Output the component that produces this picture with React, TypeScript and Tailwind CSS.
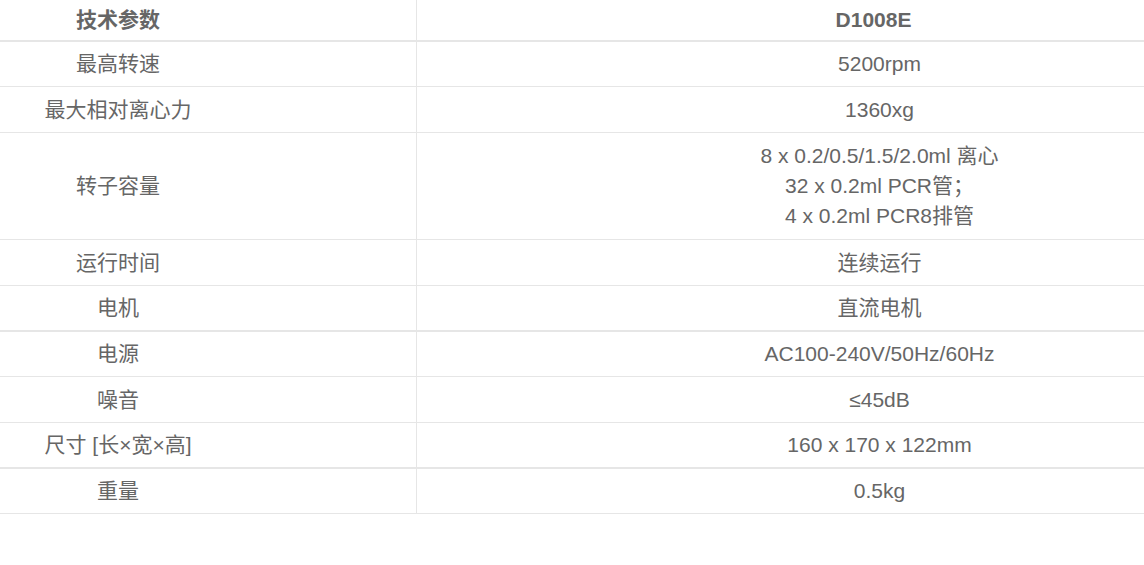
import React from "react";

type Row = { k: string; v: React.ReactNode; h: string; b2?: boolean; bold?: boolean };

const rows: Row[] = [
  { k: "技术参数", v: "D1008E", h: "h-[42px]", b2: true, bold: true },
  { k: "最高转速", v: "5200rpm", h: "h-[45px]" },
  { k: "最大相对离心力", v: "1360xg", h: "h-[46px]" },
  {
    k: "转子容量",
    v: (
      <>
        <div>8 x 0.2/0.5/1.5/2.0ml 离心</div>
        <div>32 x 0.2ml PCR管；</div>
        <div>4 x 0.2ml PCR8排管</div>
      </>
    ),
    h: "h-[107px]",
  },
  { k: "运行时间", v: "连续运行", h: "h-[46px]" },
  { k: "电机", v: "直流电机", h: "h-[46px]", b2: true },
  { k: "电源", v: "AC100-240V/50Hz/60Hz", h: "h-[45px]" },
  { k: "噪音", v: "≤45dB", h: "h-[46px]" },
  { k: "尺寸 [长×宽×高]", v: "160 x 170 x 122mm", h: "h-[46px]", b2: true },
  { k: "重量", v: "0.5kg", h: "h-[45px]" },
];

export default function App() {
  return (
    <div
      className="w-[1144px] h-[565px] overflow-hidden bg-white text-[#666] text-[21px] leading-[30px]"
      style={{ fontFamily: '"Liberation Sans", "Noto Sans CJK SC", sans-serif' }}
    >
      <div className="flex flex-col">
        {rows.map((r, i) => (
          <div
            key={i}
            className={`flex shrink-0 border-[#e6e6e6] ${r.h} ${r.b2 ? "border-b-2" : "border-b"} ${r.bold ? "font-bold" : ""}`}
          >
            <div className="w-[417px] shrink-0 border-r border-[#e6e6e6] flex items-center pr-[180px]">
              <div className="w-full text-center">{r.k}</div>
            </div>
            <div
              className={`w-[925px] shrink-0 flex flex-col items-center justify-center text-center ${r.bold ? "pr-[12px]" : ""}`}
            >
              {r.v}
            </div>
          </div>
        ))}
      </div>
    </div>
  );
}
